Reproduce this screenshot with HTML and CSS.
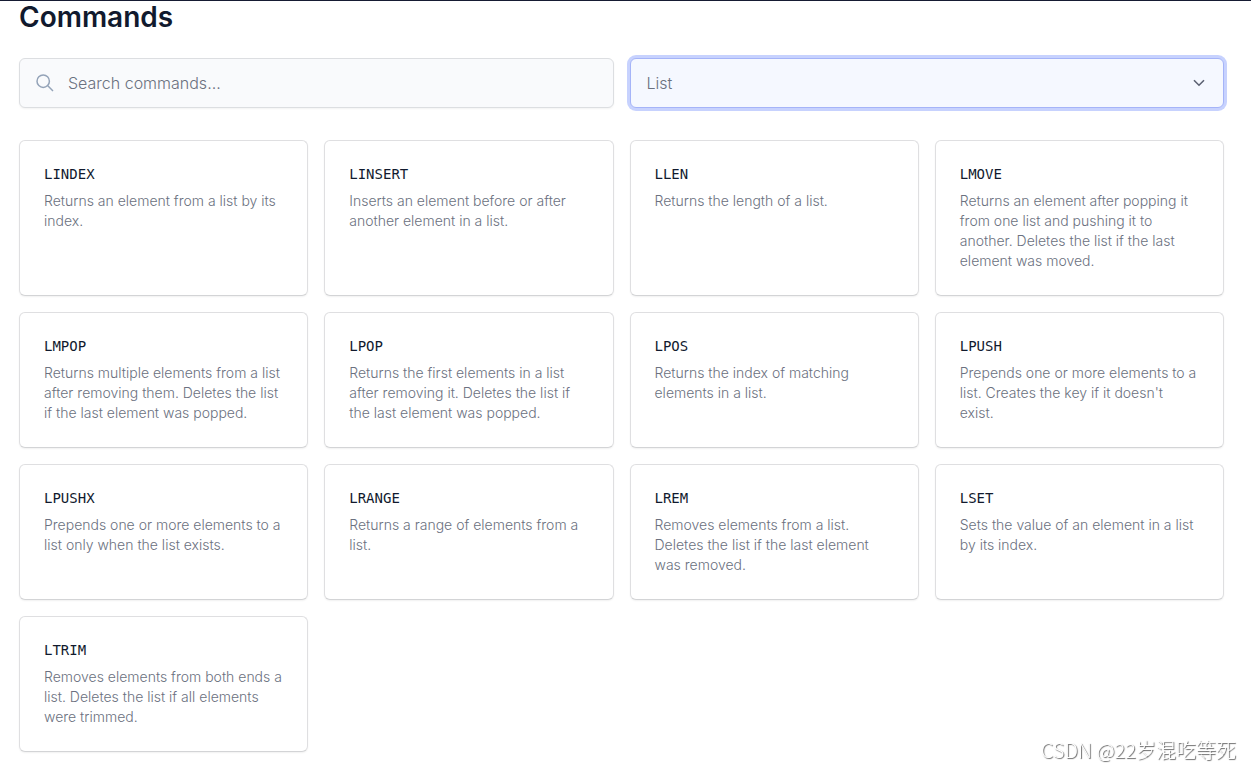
FILE: index.html
```html
<!DOCTYPE html>
<html lang="en">
<head>
<meta charset="utf-8">
<meta name="viewport" content="width=device-width, initial-scale=1">
<title>Commands</title>
<link rel="stylesheet" href="styles.css">
</head>
<body>
<main class="page">
  <h1 class="title">Commands</h1>
  <form class="filters">
    <div class="field">
      <svg class="search-icon" viewBox="0 0 18 18" aria-hidden="true"><circle cx="7.2" cy="7.2" r="6.2"/><path d="M11.8 11.8 17 17"/></svg>
      <input class="control search" type="text" aria-label="Search commands" placeholder="Search commands...">
    </div>
    <div class="field">
      <select class="control group" aria-label="Command group"><option>List</option></select>
      <svg class="chevron" viewBox="0 0 12 8" aria-hidden="true"><path d="M1 1.2 6 6.2 11 1.2"/></svg>
    </div>
  </form>
  <section class="grid">
    <a class="card" href="#lindex"><h2 class="name">LINDEX</h2><p class="text">Returns an element from a list by its index.</p></a>
    <a class="card" href="#linsert"><h2 class="name">LINSERT</h2><p class="text">Inserts an element before or after another element in a list.</p></a>
    <a class="card" href="#llen"><h2 class="name">LLEN</h2><p class="text">Returns the length of a list.</p></a>
    <a class="card" href="#lmove"><h2 class="name">LMOVE</h2><p class="text">Returns an element after popping it from one list and pushing it to another. Deletes the list if the last element was moved.</p></a>
    <a class="card" href="#lmpop"><h2 class="name">LMPOP</h2><p class="text">Returns multiple elements from a list after removing them. Deletes the list if the last element was popped.</p></a>
    <a class="card" href="#lpop"><h2 class="name">LPOP</h2><p class="text">Returns the first elements in a list after removing it. Deletes the list if the last element was popped.</p></a>
    <a class="card" href="#lpos"><h2 class="name">LPOS</h2><p class="text">Returns the index of matching elements in a list.</p></a>
    <a class="card" href="#lpush"><h2 class="name">LPUSH</h2><p class="text">Prepends one or more elements to a list. Creates the key if it doesn't exist.</p></a>
    <a class="card" href="#lpushx"><h2 class="name">LPUSHX</h2><p class="text">Prepends one or more elements to a list only when the list exists.</p></a>
    <a class="card" href="#lrange"><h2 class="name">LRANGE</h2><p class="text">Returns a range of elements from a list.</p></a>
    <a class="card" href="#lrem"><h2 class="name">LREM</h2><p class="text">Removes elements from a list. Deletes the list if the last element was removed.</p></a>
    <a class="card" href="#lset"><h2 class="name">LSET</h2><p class="text">Sets the value of an element in a list by its index.</p></a>
    <a class="card" href="#ltrim"><h2 class="name">LTRIM</h2><p class="text">Removes elements from both ends a list. Deletes the list if all elements were trimmed.</p></a>
  </section>
</main>
<div class="watermark">CSDN @22岁混吃等死</div>
</body>
</html>
```
FILE: styles.css
```css
* { box-sizing: border-box; }
body {
  margin: 0;
  background: #fff;
  border-top: 1px solid #161b33;
  font-family: Inter, sans-serif;
}
.page { padding: 0 27px 16px 19px; }
.title {
  margin: 0 0 25px;
  color: #111a2e;
  font-size: 28px;
  line-height: 32px;
  font-weight: 600;
}
.filters {
  display: grid;
  grid-template-columns: 1fr 1fr;
  gap: 16px;
  margin-bottom: 32px;
}
.field { position: relative; }
.control {
  display: block;
  width: 100%;
  height: 50px;
  margin: 0;
  border: 1px solid #dcdee1;
  border-radius: 6px;
  background: #f9fafc;
  color: #6b7180;
  font-family: inherit;
  font-size: 16px;
  font-weight: 300;
  outline: none;
}
.search {
  padding: 0 16px 0 48px;
  box-shadow: 0 1px 2px rgba(0, 0, 0, 0.05);
}
.search::placeholder { color: #6b7180; opacity: 1; }
.group {
  appearance: none;
  padding: 0 40px 0 16px;
  border-color: #a5b4f8;
  background: #f5f8ff;
  box-shadow: 0 0 0 3px #c7d2fe;
}
.search-icon {
  position: absolute;
  left: 17px;
  top: 16px;
  width: 18px;
  height: 18px;
  fill: none;
  stroke: #94a3b8;
  stroke-width: 1.5;
}
.chevron {
  position: absolute;
  right: 19px;
  top: 21px;
  width: 12px;
  height: 8px;
  fill: none;
  stroke: #5b6172;
  stroke-width: 1.6;
}
.grid {
  display: grid;
  grid-template-columns: repeat(4, 1fr);
  gap: 16px;
}
.card {
  padding: 24px;
  border: 1px solid #dfdfe1;
  border-bottom-color: #d3d4d6;
  border-radius: 6px;
  background: #fff;
  box-shadow: 0 1px 2px rgba(0, 0, 0, 0.06);
  text-decoration: none;
}
.name {
  margin: 0 0 8px;
  color: #111a2e;
  font-family: "DejaVu Sans Mono", monospace;
  font-size: 14px;
  line-height: 18px;
  font-weight: 400;
}
.text {
  margin: 0;
  color: #6b7180;
  font-size: 14px;
  line-height: 20px;
  font-weight: 300;
}
.watermark {
  position: fixed;
  right: 15px;
  bottom: 5px;
  color: #fff;
  font-family: "Noto Sans CJK SC", sans-serif;
  font-size: 20px;
  line-height: 28px;
  font-weight: 300;
  text-shadow: 1px 1px 1px #666;
}
```
